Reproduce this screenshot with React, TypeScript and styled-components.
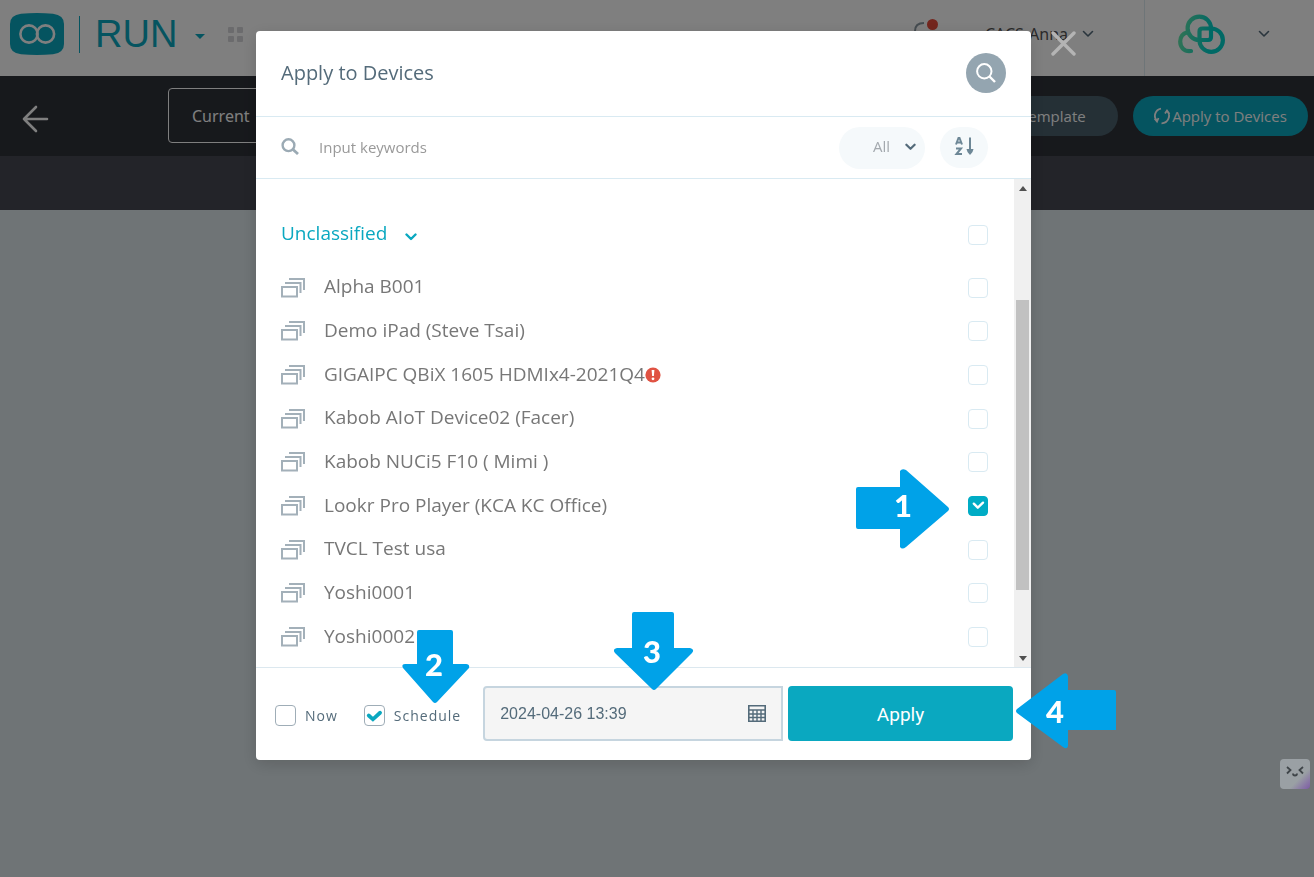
import React, { useState } from "react";
import styled, { createGlobalStyle } from "styled-components";

const teal = "#0aa8c0";
const slate = "#546b7a";

const GlobalStyle = createGlobalStyle`
  * { box-sizing: border-box; }
  body {
    margin: 0;
    background: #dee8ec;
    font-family: "Open Sans", "Noto Sans", sans-serif;
    overflow: hidden;
  }
  button, input, select { font: inherit; margin: 0; }
  button { border: 0; padding: 0; background: none; cursor: pointer; }
  svg { display: block; flex: none; }
`;

const Page = styled.div`
  min-height: 100vh;
`;

const Header = styled.header`
  display: flex;
  height: 76px;
  background: #fff;
`;

const Brand = styled.div`
  display: flex;
  align-items: center;
  padding: 0 0 8px 10px;
`;

const BrandRule = styled.span`
  width: 1px;
  height: 37px;
  margin: 0 15px;
  background: ${teal};
`;

const BrandName = styled.span`
  font: 38px/44px "Liberation Sans", sans-serif;
  color: ${teal};
`;

const BrandButton = styled.button`
  margin: 4px 23px 0 18px;
`;

const Account = styled.div`
  display: flex;
  align-items: center;
  margin-left: auto;
  padding: 0 50px 8px 0;
  gap: 14px;
`;

const Bell = styled.span`
  position: relative;
  margin: 2px 34px 0 0;
`;

const BellDot = styled.span`
  position: absolute;
  top: -3px;
  right: -1px;
  width: 11px;
  height: 11px;
  border-radius: 50%;
  background: #e74c3c;
`;

const UserName = styled.span`
  font: 16px/24px "Noto Sans", sans-serif;
  color: #555;
`;

const Workspace = styled.div`
  display: flex;
  align-items: center;
  justify-content: space-between;
  width: 170px;
  padding: 0 44px 8px 33px;
  border-left: 1px solid #dcebf0;
`;

const Toolbar = styled.div`
  display: flex;
  align-items: center;
  height: 80px;
  padding: 0 6px 0 22px;
  background: #2f3239;
`;

const BackButton = styled.button`
  padding-top: 5px;
`;

const CurrentButton = styled.button`
  width: 260px;
  height: 55px;
  margin: 0 0 2px 119px;
  padding: 2px 0 0 23px;
  border: 1px solid #fff;
  border-radius: 4px;
  color: #fff;
  font: 16px/24px "Noto Sans", sans-serif;
  text-align: left;
`;

const ToolbarActions = styled.div`
  display: flex;
  gap: 15px;
  margin-left: auto;
`;

const PillButton = styled.button<{ $primary?: boolean }>`
  display: flex;
  align-items: center;
  justify-content: center;
  height: 40px;
  width: ${(p) => (p.$primary ? "175px" : "186px")};
  border-radius: 20px;
  background: ${(p) => (p.$primary ? teal : "#4a606c")};
  color: #fff;
  font-size: 15px;
  line-height: 20px;
`;

const SubBar = styled.div`
  height: 54px;
  background: #464852;
`;

const Backdrop = styled.div`
  position: fixed;
  inset: 0;
  display: flex;
  justify-content: center;
  align-items: flex-start;
  padding: 31px 27px 31px 0;
  background: rgba(0, 0, 0, 0.5);
`;

const Dialog = styled.section`
  position: relative;
  width: 775px;
  border-radius: 4px;
  background: #fff;
  box-shadow: 0 4px 16px rgba(0, 0, 0, 0.15);
`;

const CloseButton = styled.button`
  position: absolute;
  top: 0;
  right: -45px;
`;

const DialogHeader = styled.div`
  display: flex;
  align-items: center;
  justify-content: space-between;
  height: 86px;
  padding: 0 25px 2px;
  border-bottom: 1px solid #d9eaf2;
`;

const Title = styled.h1`
  margin: 0;
  font-size: 20px;
  line-height: 28px;
  font-weight: 400;
  color: ${slate};
`;

const SearchButton = styled.button`
  display: grid;
  place-items: center;
  width: 40px;
  height: 40px;
  border-radius: 50%;
  background: #94a5b0;
`;

const FilterRow = styled.div`
  display: flex;
  align-items: center;
  height: 62px;
  padding: 0 43px 0 25px;
  border-bottom: 1px solid #d9eaf2;
`;

const KeywordLabel = styled.label`
  display: flex;
  flex: 1;
  align-items: center;
  padding-bottom: 2px;
`;

const KeywordInput = styled.input`
  flex: 1;
  height: 30px;
  margin: 0 16px;
  padding: 0 4px;
  border: 0;
  outline: 0;
  font-size: 15px;
  color: ${slate};
  &::placeholder { color: #999; opacity: 1; }
`;

const SelectWrap = styled.label`
  position: relative;
  margin-right: 15px;
`;

const SelectArrow = styled.span`
  position: absolute;
  top: 16px;
  right: 9px;
  pointer-events: none;
`;

const TypeSelect = styled.select`
  display: block;
  appearance: none;
  width: 86px;
  height: 42px;
  padding: 0 0 3px 34px;
  border: 0;
  border-radius: 21px;
  background: #f5f9fb;
  color: #a3a9ae;
  font-size: 15px;
`;

const SortButton = styled.button`
  display: grid;
  place-items: center;
  width: 48px;
  height: 41px;
  padding-bottom: 3px;
  border-radius: 21px;
  background: #f5f9fb;
`;

const ListPane = styled.div`
  display: flex;
  height: 488px;
`;

const ListContent = styled.div`
  display: flex;
  flex: 1;
  flex-direction: column;
  padding: 25px 26px 8px 25px;
`;

const GroupRow = styled.div`
  display: flex;
  align-items: center;
  justify-content: space-between;
  height: 62px;
`;

const GroupToggle = styled.button`
  display: flex;
  align-items: center;
  gap: 18px;
  padding-bottom: 4px;
  font-size: 19px;
  line-height: 28px;
  color: ${teal};
`;

const GroupChevron = styled.span`
  padding-top: 8px;
`;

const DeviceList = styled.ul`
  display: grid;
  flex: 1;
  grid-auto-rows: 1fr;
  margin: 0;
  padding: 0;
  list-style: none;
`;

const DeviceRow = styled.label`
  display: flex;
  align-items: center;
  height: 100%;
`;

const DeviceName = styled.span`
  padding: 0 0 3px 18px;
  font-size: 19px;
  line-height: 28px;
  color: #777;
`;

const Spacer = styled.span`
  flex: 1;
`;

const Check = styled.input<{ $outlined?: boolean }>`
  appearance: none;
  flex: none;
  width: ${(p) => (p.$outlined ? 21 : 20)}px;
  height: ${(p) => (p.$outlined ? 21 : 20)}px;
  border: 1px solid ${(p) => (p.$outlined ? "#9fadb7" : "#d9eaf2")};
  border-radius: 4px;
  background: #fff;
  &:checked {
    border-color: ${(p) => (p.$outlined ? "#9fadb7" : "#00acc5")};
    background: ${(p) => (p.$outlined ? "#fff" : "#00acc5")};
  }
`;

const CheckBox = styled.span`
  position: relative;
  display: block;
  line-height: 0;
`;

const CheckMark = styled.svg`
  position: absolute;
  inset: 0;
  width: 100%;
  height: 100%;
  pointer-events: none;
`;

const ScrollTrack = styled.div`
  display: flex;
  flex-direction: column;
  align-items: center;
  width: 17px;
  padding: 7px 0 6px;
  background: #f0f0f0;
`;

const ScrollThumb = styled.div`
  width: 13px;
  height: 290px;
  margin: 109px 0 auto;
  background: #c1c1c1;
`;

const Footer = styled.form`
  display: flex;
  align-items: center;
  height: 93px;
  padding: 0 18px 2px 19px;
  border-top: 1px solid #dce8ef;
`;

const Option = styled.label<{ $gap: number }>`
  display: flex;
  align-items: center;
  gap: 9px;
  margin-right: ${(p) => p.$gap}px;
  padding-top: 5px;
  font-size: 14px;
  line-height: 20px;
  letter-spacing: 1px;
  color: ${slate};
`;

const DateField = styled.div`
  display: flex;
  align-items: center;
  flex: 1;
  height: 55px;
  margin-right: 5px;
  padding: 0 15px;
  border: 2px solid #c6d5df;
  border-radius: 4px 0 0 4px;
  background: #f5f5f5;
`;

const DateInput = styled.input`
  flex: 1;
  min-width: 0;
  padding: 2px 0 0;
  border: 0;
  outline: 0;
  background: none;
  font: 16px/24px "Liberation Sans", sans-serif;
  color: ${slate};
`;

const ApplyButton = styled.button`
  width: 225px;
  height: 55px;
  padding-top: 3px;
  border-radius: 4px;
  background: ${teal};
  color: #fff;
  font: 19px/28px Roboto, sans-serif;
`;

const Callout = styled.div<{ $x: number; $y: number }>`
  position: absolute;
  left: ${(p) => p.$x}px;
  top: ${(p) => p.$y}px;
  pointer-events: none;
`;

const CalloutNumber = styled.span<{ $x: number; $y: number }>`
  position: absolute;
  left: ${(p) => p.$x}px;
  top: ${(p) => p.$y}px;
  font: 900 31px/32px Lato, sans-serif;
  color: #fff;
`;

const Assistant = styled.button`
  position: absolute;
  right: 4px;
  bottom: 88px;
  display: grid;
  place-items: center;
  width: 30px;
  height: 30px;
  padding-bottom: 5px;
  border-radius: 4px;
  background: linear-gradient(135deg, #9aa0a4 65%, #7d5aa6 100%);
`;

const Chevron = ({ color, width = 12, stroke = 2 }: { color: string; width?: number; stroke?: number }) => (
  <svg width={width} height="8" viewBox="0 0 12 8" fill="none" stroke={color} strokeWidth={stroke} strokeLinecap="round" strokeLinejoin="round">
    <path d="M1.5 1.5 6 6l4.500-4.500" />
  </svg>
);

const DeviceIcon = () => (
  <svg width="25" height="20" viewBox="0 0 25 20" fill="none" stroke="#a3b0b9" strokeWidth="2">
    <path d="M1 9h15v9.500H1zM4 5h15.500v10M8 1h15v11" />
  </svg>
);

const AlertMark = styled.svg`
  display: inline-block;
  vertical-align: -2px;
`;

const AlertIcon = () => (
  <AlertMark width="16" height="16" viewBox="0 0 16 16">
    <circle cx="8" cy="8" r="7.600" fill="#e05343" />
    <path d="M6.600 3h2.800l-.5 6H7.100z" fill="#fff" />
    <circle cx="8" cy="11.800" r="1.400" fill="#fff" />
  </AlertMark>
);

const Tick = ({ outlined, ...rest }: { outlined?: boolean } & React.InputHTMLAttributes<HTMLInputElement>) => (
  <CheckBox>
    <Check type="checkbox" $outlined={outlined} {...rest} />
    {rest.checked && (
      <CheckMark viewBox="0 0 20 20" fill="none" stroke={outlined ? teal : "#fff"} strokeWidth={outlined ? 3.6 : 2.4}>
        {outlined ? <path strokeLinecap="round" d="m4.500 10 4 3.600 6.800-6.200" /> : <path strokeLinecap="round" strokeLinejoin="round" d="m5.800 7.700 4 4 5.200-5" />}
      </CheckMark>
    )}
  </CheckBox>
);

const devices = [
  { name: "Alpha B001" },
  { name: "Demo iPad (Steve Tsai)" },
  { name: "GIGAIPC QBiX 1605 HDMIx4-2021Q4", alert: true },
  { name: "Kabob AIoT Device02 (Facer)" },
  { name: "Kabob NUCi5 F10 ( Mimi )" },
  { name: "Lookr Pro Player (KCA KC Office)" },
  { name: "TVCL Test usa" },
  { name: "Yoshi0001" },
  { name: "Yoshi0002" },
];

const callouts = [
  { n: 1, x: 600, y: 438, w: 94, h: 80, nx: 38, ny: 20, d: "M2 18H44V2Q46-1 50 1L92 38Q94 40 92 42L50 78Q46 81 44 78V60H2Q0 60 0 58V20Q0 18 2 18Z" },
  { n: 2, x: 146, y: 599, w: 68, h: 74, nx: 23, ny: 18, d: "M17 0H49Q51 0 51 2V34H64Q68 34 67 38L35 72Q33 74 31 72L1 38Q-1 34 3 34H15V2Q15 0 17 0Z" },
  { n: 3, x: 358, y: 581, w: 80, h: 79, nx: 29, ny: 23, d: "M20 0H58Q60 0 60 2V36H76Q81 37 78 41L42 77Q40 79 38 77L1 41Q-2 37 3 36H18V2Q18 0 20 0Z" },
  { n: 4, x: 759, y: 642, w: 102, h: 76, nx: 31, ny: 22, d: "M99 17H53V3Q52-1 48 1L2 36Q0 38 2 40L48 74Q52 77 53 73V57H101V19Q101 17 99 17Z" },
];

export default function App() {
  const [checked, setChecked] = useState<Record<string, boolean>>({ "Lookr Pro Player (KCA KC Office)": true });
  const [all, setAll] = useState(false);
  const [now, setNow] = useState(false);
  const [schedule, setSchedule] = useState(true);
  const [date, setDate] = useState("2024-04-26 13:39");

  return (
    <Page>
      <GlobalStyle />
      <Header>
        <Brand>
          <svg width="54" height="42" viewBox="0 0 54 42" fill="none">
            <path d="M11 .7Q27-.7 43 .7 54 2 54 11v20q0 9-11 10.300Q27 42.700 11 41.300 0 40 0 31V11Q0 2 11 .7Z" fill={teal} />
            <g stroke="#fff" strokeWidth="2.600">
              <circle cx="19" cy="21" r="8.600" />
              <circle cx="35.500" cy="21" r="8.600" />
            </g>
          </svg>
          <BrandRule />
          <BrandName>RUN</BrandName>
          <BrandButton aria-label="Switch product">
            <svg width="10" height="5" viewBox="0 0 10 5"><path d="M0 0h10L5 5z" fill={teal} /></svg>
          </BrandButton>
          <svg width="15" height="15" viewBox="0 0 15 15" fill="#d6d6da">
            <rect width="6" height="6" rx="1" /><rect x="9" width="6" height="6" rx="1" />
            <rect y="9" width="6" height="6" rx="1" /><rect x="9" y="9" width="6" height="6" rx="1" />
          </svg>
        </Brand>
        <Account>
          <Bell>
            <svg width="24" height="26" viewBox="0 0 24 26" fill="none" stroke="#8b98a1" strokeWidth="2">
              <path d="M2 19V9q0-8 9-8M20 12v7H2M9 23h5" />
            </svg>
            <BellDot />
          </Bell>
          <UserName>CACS-Anna</UserName>
          <Chevron color="#546b7a" stroke={1.6} />
        </Account>
        <Workspace>
          <svg width="48" height="42" viewBox="0 0 48 42" fill="none" stroke="url(#ring)" strokeWidth="4.200" strokeLinecap="round">
            <defs>
              <linearGradient id="ring" gradientUnits="userSpaceOnUse" x1="2" y1="20" x2="46" y2="26">
                <stop stopColor="#5ee6ac" /><stop offset=".7" stopColor="#00d2cb" />
              </linearGradient>
            </defs>
            <path d="M13 38C6 39 2.200 34 2.200 28.500 2.200 24 5 20.500 9.500 19.300" />
            <path d="M33 15.500A11.700 11.700 0 1 0 21.500 27H30q3 0 3-3z" />
            <path d="M33 15.500A11.700 11.700 0 1 1 21.500 27v-8.500q0-3 3-3z" />
          </svg>
          <Chevron color="#546b7a" stroke={1.6} />
        </Workspace>
      </Header>
      <Toolbar>
        <BackButton aria-label="Back">
          <svg width="27" height="28" viewBox="0 0 27 28" fill="none" stroke="#fff" strokeWidth="2.600" strokeLinecap="round" strokeLinejoin="round">
            <path d="M14 2 2 14l12 12M2 14h23" />
          </svg>
        </BackButton>
        <CurrentButton>Current</CurrentButton>
        <ToolbarActions>
          <PillButton>Save as Template</PillButton>
          <PillButton $primary>
            <svg width="18" height="18" viewBox="1 0 18 18" fill="none" stroke="#fff" strokeWidth="1.800">
              <path d="M4 14A7.300 7.300 0 0 1 8 1.700M14 4A7.300 7.300 0 0 1 8.500 16.300M1.500 11.500 4 14.500 5.500 11M12 6.500 14 3.500 16.500 7" />
            </svg>
            Apply to Devices
          </PillButton>
        </ToolbarActions>
      </Toolbar>
      <SubBar />

      <Backdrop>
        <Assistant aria-label="Assistant">
          <svg width="20" height="12" viewBox="0 0 20 12" fill="none" stroke="#3f4549" strokeWidth="1.800">
            <path d="m2 1 3.500 3L2 7.500M18 1l-3.500 3L18 7.500M8 7.500q0 2 2 2t2-2" />
          </svg>
        </Assistant>
        <Dialog role="dialog" aria-label="Apply to Devices">
          <CloseButton aria-label="Close">
            <svg width="25" height="25" viewBox="0 0 25 25" fill="none" stroke="#b4b4b4" strokeWidth="3.400" strokeLinecap="round">
              <path d="m2 2 21 21M23 2 2 23" />
            </svg>
          </CloseButton>
          <DialogHeader>
            <Title>Apply to Devices</Title>
            <SearchButton aria-label="Search">
              <svg width="20" height="20" viewBox="0 0 20 20" fill="none" stroke="#fff" strokeWidth="2">
                <circle cx="8.300" cy="8.300" r="7.200" /><path strokeWidth="2.400" d="m13.500 13.500 5.500 5.500" />
              </svg>
            </SearchButton>
          </DialogHeader>
          <FilterRow>
            <KeywordLabel>
              <svg width="18" height="17" viewBox="0 0 18 17" fill="none" stroke="#9baab4" strokeWidth="2.400">
                <circle cx="7.500" cy="7.200" r="5.900" /><path strokeWidth="2.800" d="m12 11.500 5 4.500" />
              </svg>
              <KeywordInput aria-label="Keywords" placeholder="Input keywords" />
            </KeywordLabel>
            <SelectWrap>
              <TypeSelect aria-label="Device type"><option>All</option></TypeSelect>
              <SelectArrow><Chevron color={slate} width={11} stroke={2.4} /></SelectArrow>
            </SelectWrap>
            <SortButton aria-label="Sort A to Z">
              <svg width="20" height="19" viewBox="0 0 20 19" fill="none" stroke="#6d8796" strokeWidth="2">
                <path d="m2 7.500 2.500-6.500h1L8 7.500M3 5.500h4M2 11.500h5l-4.500 5.500H8M16 .5V13" />
                <path fill="#6d8796" stroke="none" d="M12.500 12h7l-1 3-2.500 3-2.500-3z" />
              </svg>
            </SortButton>
          </FilterRow>
          <ListPane>
            <ListContent>
              <GroupRow>
                <GroupToggle>
                  Unclassified
                  <GroupChevron><Chevron color={teal} stroke={2.4} /></GroupChevron>
                </GroupToggle>
                <Tick aria-label="Select all unclassified" checked={all} onChange={() => setAll(!all)} />
              </GroupRow>
              <DeviceList>
                {devices.map((d) => (
                  <li key={d.name}>
                    <DeviceRow>
                      <DeviceIcon />
                      <DeviceName>{d.name}{d.alert && <AlertIcon />}</DeviceName>
                      <Spacer />
                      <Tick checked={!!checked[d.name]} onChange={() => setChecked({ ...checked, [d.name]: !checked[d.name] })} />
                    </DeviceRow>
                  </li>
                ))}
              </DeviceList>
            </ListContent>
            <ScrollTrack>
              <svg width="8" height="5" viewBox="0 0 8 5"><path d="M0 5h8L4 0z" fill="#505050" /></svg>
              <ScrollThumb />
              <svg width="8" height="5" viewBox="0 0 8 5"><path d="M0 0h8L4 5z" fill="#505050" /></svg>
            </ScrollTrack>
          </ListPane>
          <Footer onSubmit={(e) => e.preventDefault()}>
            <Option $gap={26}>
              <Tick outlined checked={now} onChange={() => setNow(!now)} />
              Now
            </Option>
            <Option $gap={22}>
              <Tick outlined checked={schedule} onChange={() => setSchedule(!schedule)} />
              Schedule
            </Option>
            <DateField>
              <DateInput aria-label="Schedule time" value={date} onChange={(e) => setDate(e.target.value)} />
              <svg width="18" height="17" viewBox="0 0 18 17" fill="none" stroke={slate}>
                <path strokeWidth="1.600" d="M.8.800h16.400v15.400H.8z" />
                <path strokeWidth="1.400" d="M1 5h16M1 9h16M1 12.500h16M5 5v11M9 5v11M13 5v11" />
              </svg>
            </DateField>
            <ApplyButton>Apply</ApplyButton>
          </Footer>
          {callouts.map((c) => (
            <Callout key={c.n} $x={c.x} $y={c.y}>
              <svg width={c.w} height={c.h} viewBox={`0 0 ${c.w} ${c.h}`}><path d={c.d} fill="#00a2e8" /></svg>
              <CalloutNumber $x={c.nx} $y={c.ny}>{c.n}</CalloutNumber>
            </Callout>
          ))}
        </Dialog>
      </Backdrop>
    </Page>
  );
}
